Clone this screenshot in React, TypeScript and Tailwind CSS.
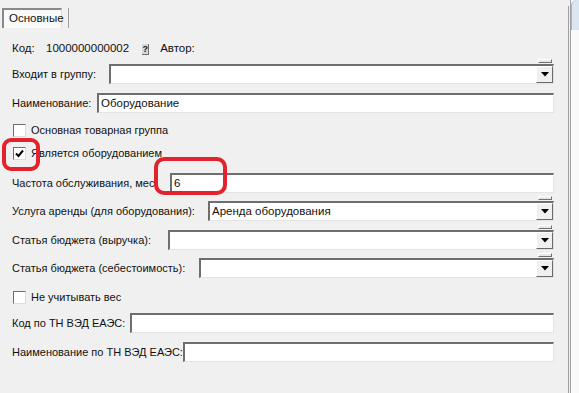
import React from "react";

const font = { fontFamily: '"Liberation Sans", Arial, sans-serif' };

const Field = ({ value = "" }: { value?: string }) => (
  <div className="flex-1 h-[20px] bg-white border-t-2 border-l-2 border-b border-r border-t-[#6e6e6e] border-l-[#6e6e6e] border-b-[#e3e3e3] border-r-[#e3e3e3] flex items-center pl-[2px] text-[11.5px] text-[#111]">
    {value}
  </div>
);

const Combo = ({ value = "" }: { value?: string }) => (
  <div className="flex-1 h-[20px] relative bg-white border-t-2 border-l-2 border-b border-r border-t-[#6e6e6e] border-l-[#6e6e6e] border-b-[#e3e3e3] border-r-[#e3e3e3] flex items-center pl-[2px] text-[11.5px] text-[#111]">
    {value}
    <div className="absolute right-[1px] top-[-7px] w-[14px] h-[4px] bg-[#e8e8e8] border-t border-l border-b border-r border-t-white border-l-white border-b-[#707070] border-r-[#707070]" />
    <div className="absolute right-0 top-0 w-[17px] h-[17px] bg-[#f0f0f0] border border-t-white border-l-white border-b-[#6a6a6a] border-r-[#6a6a6a] flex items-center justify-center">
      <svg width="8" height="5" viewBox="0 0 8 5">
        <polygon points="0,0 8,0 4,4.5" fill="#000" />
      </svg>
    </div>
  </div>
);

const Check = ({ checked = false, label }: { checked?: boolean; label: string }) => (
  <div className="h-[20px] flex items-center pl-[1px]">
    <div className="w-[13px] h-[13px] bg-white border border-t-[#6e6e6e] border-l-[#6e6e6e] border-b-[#dcdcdc] border-r-[#dcdcdc] flex items-center justify-center">
      {checked && (
        <svg width="9" height="9" viewBox="0 0 9 9">
          <path d="M1 4.5 L3.5 7 L8 1.5" stroke="#000" strokeWidth="2" fill="none" />
        </svg>
      )}
    </div>
    <span className="ml-[5px] text-[11px] text-[#111]">{label}</span>
  </div>
);

const Row = ({ label, w, mt, children }: { label: string; w: number; mt: string; children: React.ReactNode }) => (
  <div className={`flex items-center h-[20px] ${mt}`}>
    <span className="text-[11px] text-[#111] whitespace-nowrap shrink-0" style={{ width: w }}>
      {label}
    </span>
    {children}
  </div>
);

export default function App() {
  return (
    <div className="w-[579px] h-[393px] bg-[#f0f0f0] flex overflow-hidden" style={font}>
      <div className="w-[568px] h-full relative">
        {/* tabs */}
        <div className="h-[28px] flex items-end pl-[2px]">
          <div className="h-[20px] w-[60px] bg-[#f9f9f9] border-t-2 border-l-2 border-r border-t-[#8a8a8a] border-l-[#8a8a8a] border-r-[#e0e0e0] flex items-center pl-[5px] text-[11.5px] text-[#111]">
            Основные
          </div>
          <div className="ml-[6px] w-px h-[20px] bg-[#a0a0a0]" />
        </div>

        <div className="pl-[12px] pr-[14px]">
          <div className="flex items-center h-[20px] mt-[11px] text-[11.5px] text-[#111]">
            <span className="w-[34px]">Код:</span>
            <span>1000000000002</span>
            <div className="ml-[13px] w-[7px] h-[11px] bg-[#d8d8d8] border-r border-b border-[#707070] text-[9px] leading-[10px] font-bold text-center">?</div>
            <span className="ml-[11px]">Автор:</span>
          </div>
          <Row label="Входит в группу:" w={97} mt="mt-[5px]">
            <Combo />
          </Row>
          <Row label="Наименование:" w={85} mt="mt-[9px]">
            <Field value="Оборудование" />
          </Row>
          <div className="mt-[7px]">
            <Check label="Основная товарная группа" />
          </div>
          <div className="mt-[3px]">
            <Check checked label="Является оборудованием" />
          </div>
          <Row label="Частота обслуживания, мес:" w={158} mt="mt-[10px]">
            <Field value="6" />
          </Row>
          <Row label="Услуга аренды (для оборудования):" w={196} mt="mt-[8px]">
            <Combo value="Аренда оборудования" />
          </Row>
          <Row label="Статья бюджета (выручка):" w={156} mt="mt-[9px]">
            <Combo />
          </Row>
          <Row label="Статья бюджета (себестоимость):" w={187} mt="mt-[8px]">
            <Combo />
          </Row>
          <div className="mt-[9px]">
            <Check label="Не учитывать вес" />
          </div>
          <Row label="Код по ТН ВЭД ЕАЭС:" w={118} mt="mt-[6px]">
            <Field />
          </Row>
          <Row label="Наименование по ТН ВЭД ЕАЭС:" w={171} mt="mt-[9px]">
            <Field />
          </Row>
        </div>

        {/* red annotation marks */}
        <div className="absolute left-[2px] top-[138px] w-[38px] h-[33px] border-[4px] border-[#e3232b] rounded-[9px]" />
        <div className="absolute left-[154px] top-[157px] w-[73px] h-[38px] border-[4px] border-[#e3232b] rounded-[10px]" />
      </div>

      {/* right frame */}
      <div className="w-px h-full bg-[#a0a0a0] mt-[6px]" />
      <div className="w-px h-full bg-[#f0f0f0]" />
      <div className="w-px h-full bg-[#a0a0a0]" />
      <div className="flex-1 h-full bg-[#f9f9f9] flex flex-col">
        <div className="h-[30px] bg-[#dbe6f3] rounded-tl-[6px] border-l border-[#9fb4d0]" />
      </div>
    </div>
  );
}
